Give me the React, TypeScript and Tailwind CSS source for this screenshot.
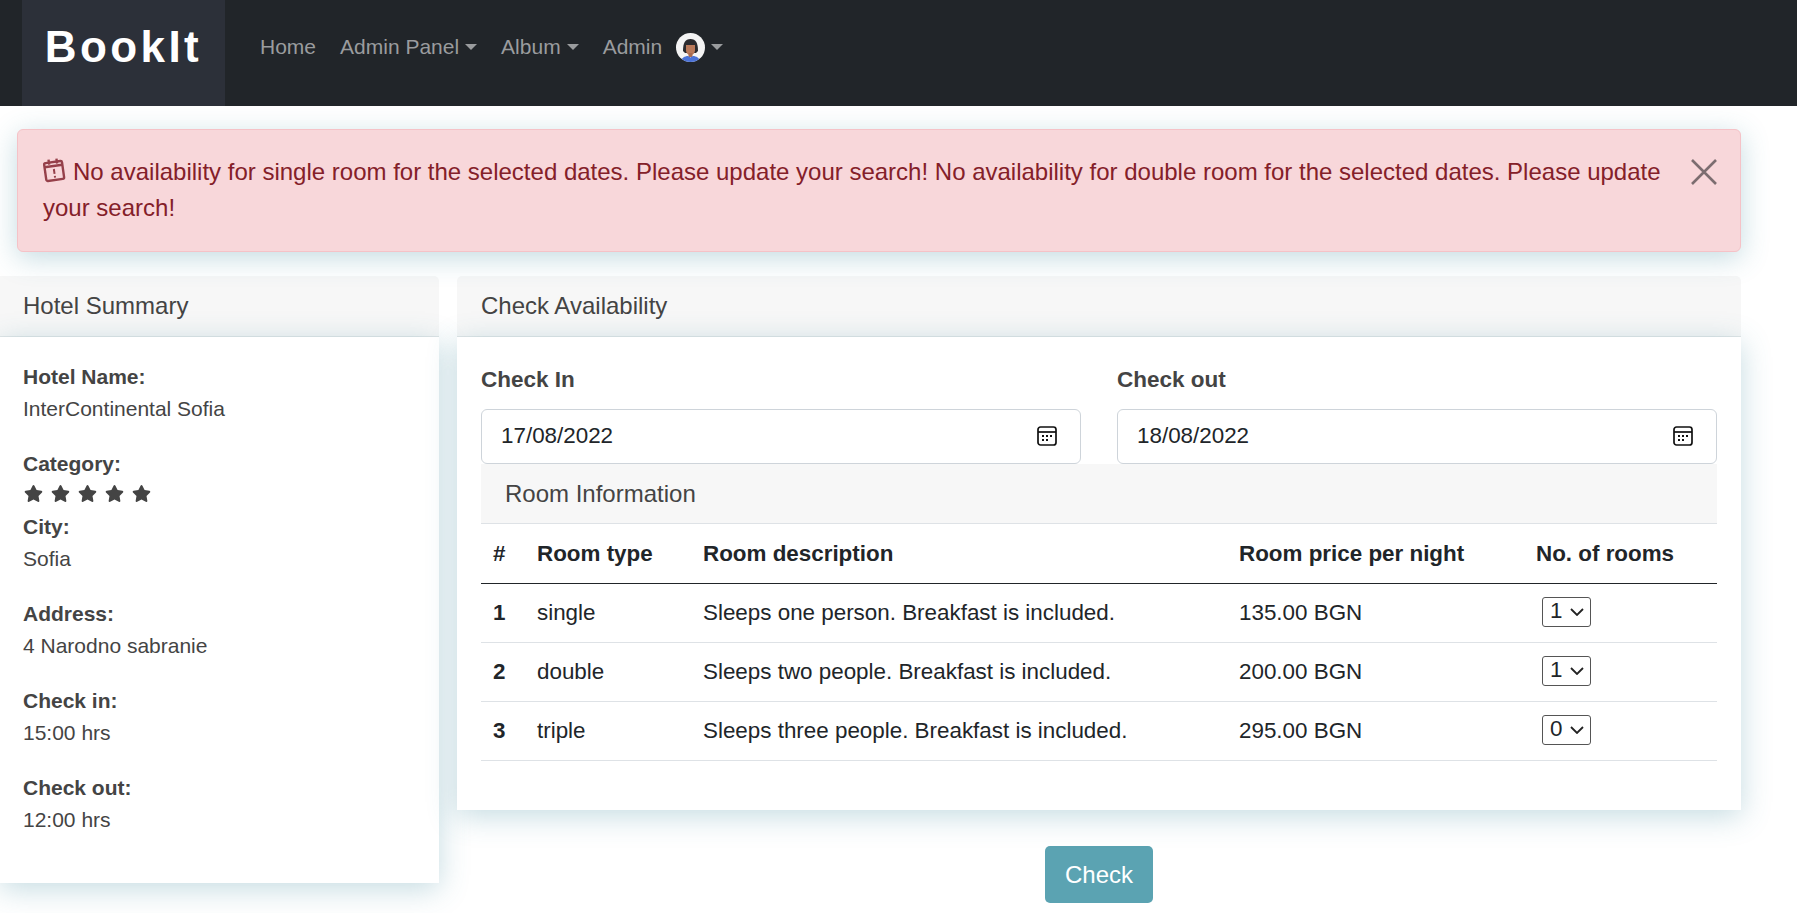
import { FaStar } from "react-icons/fa"

const rooms = [
  { id: 1, type: "single", description: "Sleeps one person. Breakfast is included.", price: "135.00 BGN", count: 1 },
  { id: 2, type: "double", description: "Sleeps two people. Breakfast is included.", price: "200.00 BGN", count: 1 },
  { id: 3, type: "triple", description: "Sleeps three people. Breakfast is included.", price: "295.00 BGN", count: 0 },
]

const summary = [
  { label: "Hotel Name:", value: "InterContinental Sofia" },
  { label: "Category:", value: null },
  { label: "City:", value: "Sofia" },
  { label: "Address:", value: "4 Narodno sabranie" },
  { label: "Check in:", value: "15:00 hrs" },
  { label: "Check out:", value: "12:00 hrs" },
]

function Caret() {
  return <span className="ml-[6px] inline-block h-0 w-0 border-x-[6px] border-t-[6px] border-x-transparent border-t-[#9a9c9e]" />
}

function Avatar() {
  return (
    <svg width="29" height="29" viewBox="0 0 29 29" className="ml-[14px]">
      <defs>
        <clipPath id="avatar-clip">
          <circle cx="14.5" cy="14.5" r="14.5" />
        </clipPath>
      </defs>
      <g clipPath="url(#avatar-clip)">
        <rect width="29" height="29" fill="#f4f4f4" />
        <path d="M7 18c0-8 2-12 7.5-12S22 10 22 18l-2 2H9z" fill="#2a2a2e" />
        <path d="M10 12h9v5c0 3-2 5-4.500 5S10 20 10 17z" fill="#b9795a" />
        <rect x="12.500" y="20" width="4" height="4" fill="#a86a4e" />
        <path d="M5 29c0-4 4-6 7-6l2.500 1.500L17 23c3 0 7 2 7 6z" fill="#4b72d6" />
      </g>
    </svg>
  )
}

function CalendarIcon() {
  return (
    <svg width="20" height="20" viewBox="0 0 20 20" fill="none" className="shrink-0 -translate-y-[1px]">
      <rect x="1" y="1" width="18" height="18" rx="2.500" stroke="#111" strokeWidth="1.700" />
      <path d="M1 6h18" stroke="#111" strokeWidth="1.700" />
      <g fill="#111">
        <rect x="5" y="9" width="2" height="2" />
        <rect x="9" y="9" width="2" height="2" />
        <rect x="13" y="9" width="2" height="2" />
        <rect x="5" y="13" width="2" height="2" />
        <rect x="9" y="13" width="2" height="2" />
      </g>
    </svg>
  )
}

function AlertCalendar() {
  return (
    <svg width="22" height="24" viewBox="0 0 22 24" fill="none" className="mr-[8px] inline-block -translate-y-[4px] -rotate-[8deg] align-middle">
      <rect x="2" y="4" width="18" height="18" rx="1.500" stroke="#96404a" strokeWidth="2.400" />
      <path d="M2 8h18M7 1v5M15 1v5" stroke="#96404a" strokeWidth="2.400" />
      <path d="M11 11v5M11 18v1.800" stroke="#96404a" strokeWidth="2" />
    </svg>
  )
}

function DateField({ label, value, className }: { label: string; value: string; className: string }) {
  return (
    <div className={className}>
      <div className="text-[22.5px] font-bold leading-[36px] text-[#444]">{label}</div>
      <div className="mt-[11px] flex h-[55px] items-center justify-between rounded-[6px] border border-[#ced4da] bg-white pl-[19px] pr-[23px] text-[22.4px] text-[#212529]">
        <span className="-translate-y-[1px]">{value}</span>
        <CalendarIcon />
      </div>
    </div>
  )
}

function RoomSelect({ count }: { count: number }) {
  return (
    <div className="relative mb-[1px] ml-[6px] h-[30px] w-[49px]">
      <select
        defaultValue={count}
        className="block h-full w-full appearance-none rounded-[3px] border border-[#555] bg-white pb-[3px] pl-[7px] text-[22.4px] leading-[22px]"
      >
        <option value={0}>0</option>
        <option value={1}>1</option>
        <option value={2}>2</option>
      </select>
      <svg width="14" height="8" viewBox="0 0 14 8" fill="none" className="pointer-events-none absolute right-[7px] top-[11px]" stroke="#222" strokeWidth="1.800">
        <path d="M1 1l6 6 6-6" />
      </svg>
    </div>
  )
}

export default function App() {
  return (
    <div className="min-h-[913px] bg-white font-['Liberation_Sans',Arial,sans-serif] text-[21px]">
      <nav className="flex h-[106px] items-stretch bg-[#212529] pl-[22px]">
        <a className="flex w-[203px] items-center justify-center bg-[#2c3039] pb-3 text-[44px] font-bold tracking-[3.4px] text-white">
          BookIt
        </a>
        <div className="flex items-center pb-3 pl-[23px] text-[#9a9c9e]">
          <a className="px-3">Home</a>
          <a className="flex items-center px-3">Admin Panel<Caret /></a>
          <a className="flex items-center px-3">Album<Caret /></a>
          <a className="flex items-center px-3">Admin<Avatar /><Caret /></a>
        </div>
      </nav>

      <div className="pl-[17px] pr-[56px] pt-[23px]">
        <div className="relative rounded-[6px] border border-[#f5c2c7] bg-[#f8d7da] pb-[25px] pl-[25px] pr-[60px] pt-6 text-[24px] leading-[36px] text-[#842029] shadow-[0_6px_28px_rgba(60,135,155,0.3)]">
          <AlertCalendar />
          No availability for single room for the selected dates. Please update your search! No availability for double room for the selected dates. Please update your search!
          <svg width="26" height="26" viewBox="0 0 26 26" className="absolute right-[23px] top-[29px]" stroke="#7c6d70" strokeWidth="2.600">
            <path d="M1 1l24 24M25 1L1 25" />
          </svg>
        </div>
      </div>

      <div className="flex items-start gap-[18px] pr-[56px] pt-[24px]">
        <section className="w-[439px]">
          <h2 className="flex h-[61px] items-center rounded-tr-[5px] border-b border-[#e2e6e7] bg-[#f7f7f7] pb-[1px] pl-[23px] text-[24px] text-[#444]">Hotel Summary</h2>
          <div className="relative bg-white px-[23px] pb-[24px] pt-[24px] text-[#444] shadow-[0_6px_28px_rgba(60,135,155,0.3)]">
            {summary.map((item) => (
              <div key={item.label} className={item.value ? "mb-[23px]" : ""}>
                <div className="font-bold leading-[32px]">{item.label}</div>
                {item.value ? (
                  <div className="leading-[32px]">{item.value}</div>
                ) : (
                  <div className="flex h-[31px] items-start gap-[8px] pl-[1px] pt-[4px]">
                    {[0, 1, 2, 3, 4].map((star) => (
                      <FaStar key={star} className="h-[19px] w-[19px] text-[#444]" />
                    ))}
                  </div>
                )}
              </div>
            ))}
          </div>
        </section>

        <div className="flex-1">
          <section>
            <h2 className="flex h-[61px] items-center rounded-t-[5px] border-b border-[#e2e6e7] bg-[#f7f7f7] pb-[1px] pl-[24px] text-[24px] text-[#444]">Check Availability</h2>
            <div className="relative bg-white pb-[49px] pl-[24px] pr-[24px] pt-[25px] shadow-[0_6px_28px_rgba(60,135,155,0.3)]">
              <div className="flex gap-[36px]">
                <DateField label="Check In" value="17/08/2022" className="w-[600px]" />
                <DateField label="Check out" value="18/08/2022" className="flex-1" />
              </div>
              <div className="flex h-[60px] items-center border-b border-[#dee2e6] bg-[#f7f7f7] pl-[24px] text-[24px] text-[#444]">Room Information</div>
              <table className="w-full table-fixed border-collapse text-left text-[22.4px] text-[#212529]">
                <colgroup>
                  <col className="w-[44px]" />
                  <col className="w-[166px]" />
                  <col className="w-[536px]" />
                  <col className="w-[297px]" />
                  <col />
                </colgroup>
                <thead>
                  <tr className="h-[59px] border-b border-[#212529]">
                    <th className="px-3 pt-[2px] font-bold">#</th>
                    <th className="px-3 pt-[2px] font-bold">Room type</th>
                    <th className="px-3 pt-[2px] font-bold">Room description</th>
                    <th className="px-3 pt-[2px] font-bold">Room price per night</th>
                    <th className="px-3 pt-[2px] font-bold">No. of rooms</th>
                  </tr>
                </thead>
                <tbody>
                  {rooms.map((room) => (
                    <tr key={room.id} className="h-[59px] border-b border-[#dee2e6]">
                      <td className="px-3 font-bold">{room.id}</td>
                      <td className="px-3">{room.type}</td>
                      <td className="px-3">{room.description}</td>
                      <td className="px-3">{room.price}</td>
                      <td className="px-3">
                        <RoomSelect count={room.count} />
                      </td>
                    </tr>
                  ))}
                </tbody>
              </table>
            </div>
          </section>
          <div className="flex justify-center pt-[36px]">
            <button className="h-[57px] w-[108px] rounded-[5px] bg-[#5ba3b2] pt-[2px] text-[24px] text-white">Check</button>
          </div>
        </div>
      </div>
    </div>
  )
}
